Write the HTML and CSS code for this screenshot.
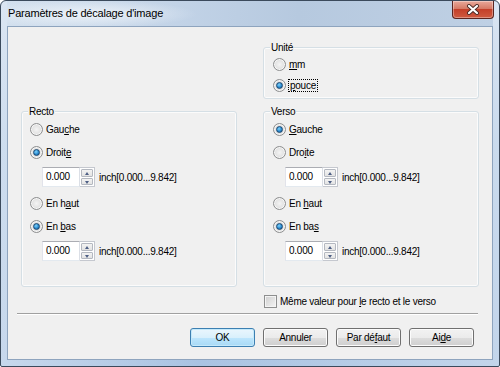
FILE: index.html
```html
<!DOCTYPE html>
<html lang="fr">
  <head>
    <meta charset="UTF-8" />
    <title>Paramètres de décalage d'image</title>
    <link rel="stylesheet" href="styles.css">
  </head>
  <body>
    <div class="window">
      <div class="titlebar">
        <span class="title">Paramètres de décalage d'image</span>
        <button class="close" aria-label="Fermer">
          <svg width="14" height="11" viewBox="0 0 14 11">
            <path d="M3 2 L11 9 M11 2 L3 9" stroke="#4a2a26" stroke-width="4" stroke-linecap="round" />
            <path d="M3 2 L11 9 M11 2 L3 9" stroke="#fff" stroke-width="2.2" stroke-linecap="round" />
          </svg>
        </button>
      </div>

      <div class="client">
        <div class="groups">
          <div class="group unit">
            <span class="legend">Unité</span>
            <label class="opt"><span class="radio"></span><span><u>m</u>m</span></label>
            <label class="opt"><span class="radio on"></span><span class="focus"><u>p</u>ouce</span></label>
          </div>

          <div class="group side recto">
            <span class="legend">Recto</span>
            <label class="opt"><span class="radio"></span><span>Gau<u>c</u>he</span></label>
            <label class="opt gap"><span class="radio on"></span><span>Droit<u>e</u></span></label>
            <div class="spin first">
              <span class="value">0.000</span>
              <span class="arrows"><span class="up"></span><span class="down"></span></span>
              <span class="range">inch[0.000...9.842]</span>
            </div>
            <label class="opt"><span class="radio"></span><span>En h<u>a</u>ut</span></label>
            <label class="opt gap"><span class="radio on"></span><span>En <u>b</u>as</span></label>
            <div class="spin">
              <span class="value">0.000</span>
              <span class="arrows"><span class="up"></span><span class="down"></span></span>
              <span class="range">inch[0.000...9.842]</span>
            </div>
          </div>

          <div class="group side verso">
            <span class="legend">Verso</span>
            <label class="opt"><span class="radio on"></span><span><u>G</u>auche</span></label>
            <label class="opt gap"><span class="radio"></span><span>Dro<u>i</u>te</span></label>
            <div class="spin first">
              <span class="value">0.000</span>
              <span class="arrows"><span class="up"></span><span class="down"></span></span>
              <span class="range">inch[0.000...9.842]</span>
            </div>
            <label class="opt"><span class="radio"></span><span>En <u>h</u>aut</span></label>
            <label class="opt gap"><span class="radio on"></span><span>En ba<u>s</u></span></label>
            <div class="spin">
              <span class="value">0.000</span>
              <span class="arrows"><span class="up"></span><span class="down"></span></span>
              <span class="range">inch[0.000...9.842]</span>
            </div>
          </div>
        </div>

        <label class="same"><span class="check"></span><span>Même valeur pour <u>l</u>e recto et le verso</span></label>

        <div class="separator"></div>

        <div class="buttons">
          <button class="btn default">OK</button>
          <button class="btn">Annuler</button>
          <button class="btn">Par dé<u>f</u>aut</button>
          <button class="btn">Ai<u>d</u>e</button>
        </div>
      </div>
    </div>
  </body>
</html>
```

FILE: styles.css
```css
body {
  margin: 0;
  background: #fff;
  font-family: "Liberation Sans", Arial, sans-serif;
  font-size: 10px;
  letter-spacing: -0.25px;
  color: #000;
}

u {
  text-decoration: underline;
  text-underline-offset: 1px;
}

.window {
  width: 500px;
  height: 367px;
  box-sizing: border-box;
  border: 1px solid #3b4a5c;
  border-radius: 6px 6px 2px 2px;
  padding: 0 6px 6px 6px;
  display: flex;
  flex-direction: column;
  background:
    linear-gradient(to right, rgba(255,255,255,0.35), rgba(255,255,255,0) 40%, rgba(255,255,255,0.15) 70%, rgba(255,255,255,0.3)),
    linear-gradient(#c9d9ec, #b3cbe6 40%, #a9c3e2);
}

.titlebar {
  height: 25px;
  display: flex;
  align-items: flex-start;
  padding-left: 1px;
  background:
    radial-gradient(ellipse 110px 14px at 80px 13px, rgba(240,245,250,0.9), rgba(240,245,250,0) 100%),
    linear-gradient(to right, #d3e0ee, #c2d3e7 35%, #b6c9df 60%, #bfd0e4 100%);
}

.title {
  font-size: 11px;
  letter-spacing: -0.2px;
  line-height: 25px;
  color: #000;
}

.close {
  margin-left: auto;
  margin-right: -1px;
  width: 42px;
  height: 18px;
  border: 1px solid #5b2520;
  border-top: none;
  border-radius: 0 0 4px 4px;
  padding: 0;
  display: flex;
  align-items: center;
  justify-content: center;
  background: linear-gradient(#e9a99b, #d67a66 45%, #c4402a 50%, #cf5a40 100%);
  box-shadow: inset 0 0 0 1px rgba(255,255,255,0.35);
}

.client {
  flex: 1;
  border: 1px solid #8ea4be;
  background: #f0f0f0;
  padding: 20px 14px 0 13px;
  display: flex;
  flex-direction: column;
}

.groups {
  display: grid;
  grid-template-columns: 216px 216px;
  grid-template-rows: 52px 176px;
  column-gap: 26px;
  row-gap: 12px;
}

.group {
  position: relative;
  box-sizing: border-box;
  border: 1px solid #d5dfe5;
  border-radius: 3px;
  box-shadow: inset 0 0 0 1px #fbfbfb;
  display: flex;
  flex-direction: column;
}

.legend {
  position: absolute;
  top: -7px;
  left: 6px;
  padding: 0 1px;
  line-height: 13px;
  background: #f0f0f0;
}

.unit {
  grid-column: 2;
  grid-row: 1;
  padding: 9px 0 0 9px;
  gap: 7px;
}

.recto {
  grid-column: 1;
  grid-row: 2;
  padding: 10px 0 0 8px;
}

.verso {
  grid-column: 2;
  grid-row: 2;
  padding: 10px 0 0 9px;
}

.opt {
  display: flex;
  align-items: center;
  height: 14px;
  gap: 3px;
}

.side .opt.gap {
  margin-top: 9px;
}

.radio {
  position: relative;
  width: 11px;
  height: 11px;
  border: 1px solid #8d8e8f;
  border-radius: 50%;
  background: radial-gradient(circle at 50% 50%, #f4f4f4 0, #e6e6e6 45%, #cfcfcf 100%);
  box-shadow: inset 0 0 0 1px #f7f7f7;
}

.radio.on::after {
  content: "";
  position: absolute;
  left: 2px;
  top: 2px;
  width: 5px;
  height: 5px;
  border: 1px solid #1b4770;
  border-radius: 50%;
  background: radial-gradient(circle at 40% 35%, #7fd3fb, #2b8bd0 55%, #0d4f86);
}

.focus {
  outline: 1px dotted #000;
  outline-offset: 0;
  padding: 0 1px;
}

.spin {
  display: flex;
  align-items: center;
  margin: 8px 0 11px 12px;
}

.spin.first {
  margin-bottom: 9px;
}

.value {
  box-sizing: border-box;
  width: 38px;
  height: 20px;
  border: 1px solid #abadb3;
  border-color: #abadb3 #dbdfe6 #e3e9ef #e2e3ea;
  background: #fff;
  padding-left: 3px;
  line-height: 18px;
}

.arrows {
  display: flex;
  flex-direction: column;
  width: 15px;
  height: 20px;
  box-sizing: border-box;
  border: 1px solid #c5c8cf;
  border-left: none;
  background: #fff;
  padding: 1px;
  gap: 1px;
}

.arrows span {
  flex: 1;
  position: relative;
  border: 1px solid #b4b8c0;
  border-radius: 1px;
  background: linear-gradient(#f3f3f3, #e3e3e3);
}

.arrows span::after {
  content: "";
  position: absolute;
  left: 3px;
  top: 2px;
  border-left: 2.5px solid transparent;
  border-right: 2.5px solid transparent;
}

.arrows .up::after {
  border-bottom: 3px solid #4e5f85;
}

.arrows .down::after {
  top: 2px;
  border-top: 3px solid #4e5f85;
}

.range {
  margin-left: 4px;
}

.same {
  display: flex;
  align-items: center;
  gap: 3px;
  margin: 7px 0 0 243px;
  height: 14px;
}

.check {
  width: 11px;
  height: 11px;
  border: 1px solid #8e8f8f;
  background: linear-gradient(135deg, #cfcfcf, #f4f4f4);
  box-shadow: inset 0 0 0 1px #f4f4f4;
}

.separator {
  margin: 5px 0 0 -4px;
  border-top: 1px solid #a0a0a0;
  border-bottom: 1px solid #fff;
}

.buttons {
  display: flex;
  justify-content: flex-end;
  gap: 8px;
  margin: 13px 4px 0 0;
}

.btn {
  width: 65px;
  height: 19px;
  padding: 0;
  border: 1px solid #707070;
  border-radius: 3px;
  font: inherit;
  letter-spacing: inherit;
  color: #000;
  background: linear-gradient(#f2f2f2, #ebebeb 50%, #dddddd 50%, #cfcfcf);
  box-shadow: inset 0 0 0 1px #fcfcfc;
}

.btn.default {
  border-color: #3c7fb1;
  background: linear-gradient(#eaf6fd, #d9f0fc 50%, #bee6fd 50%, #a7d9f5);
  box-shadow: inset 0 0 0 1px #c4e9fb;
}
```
